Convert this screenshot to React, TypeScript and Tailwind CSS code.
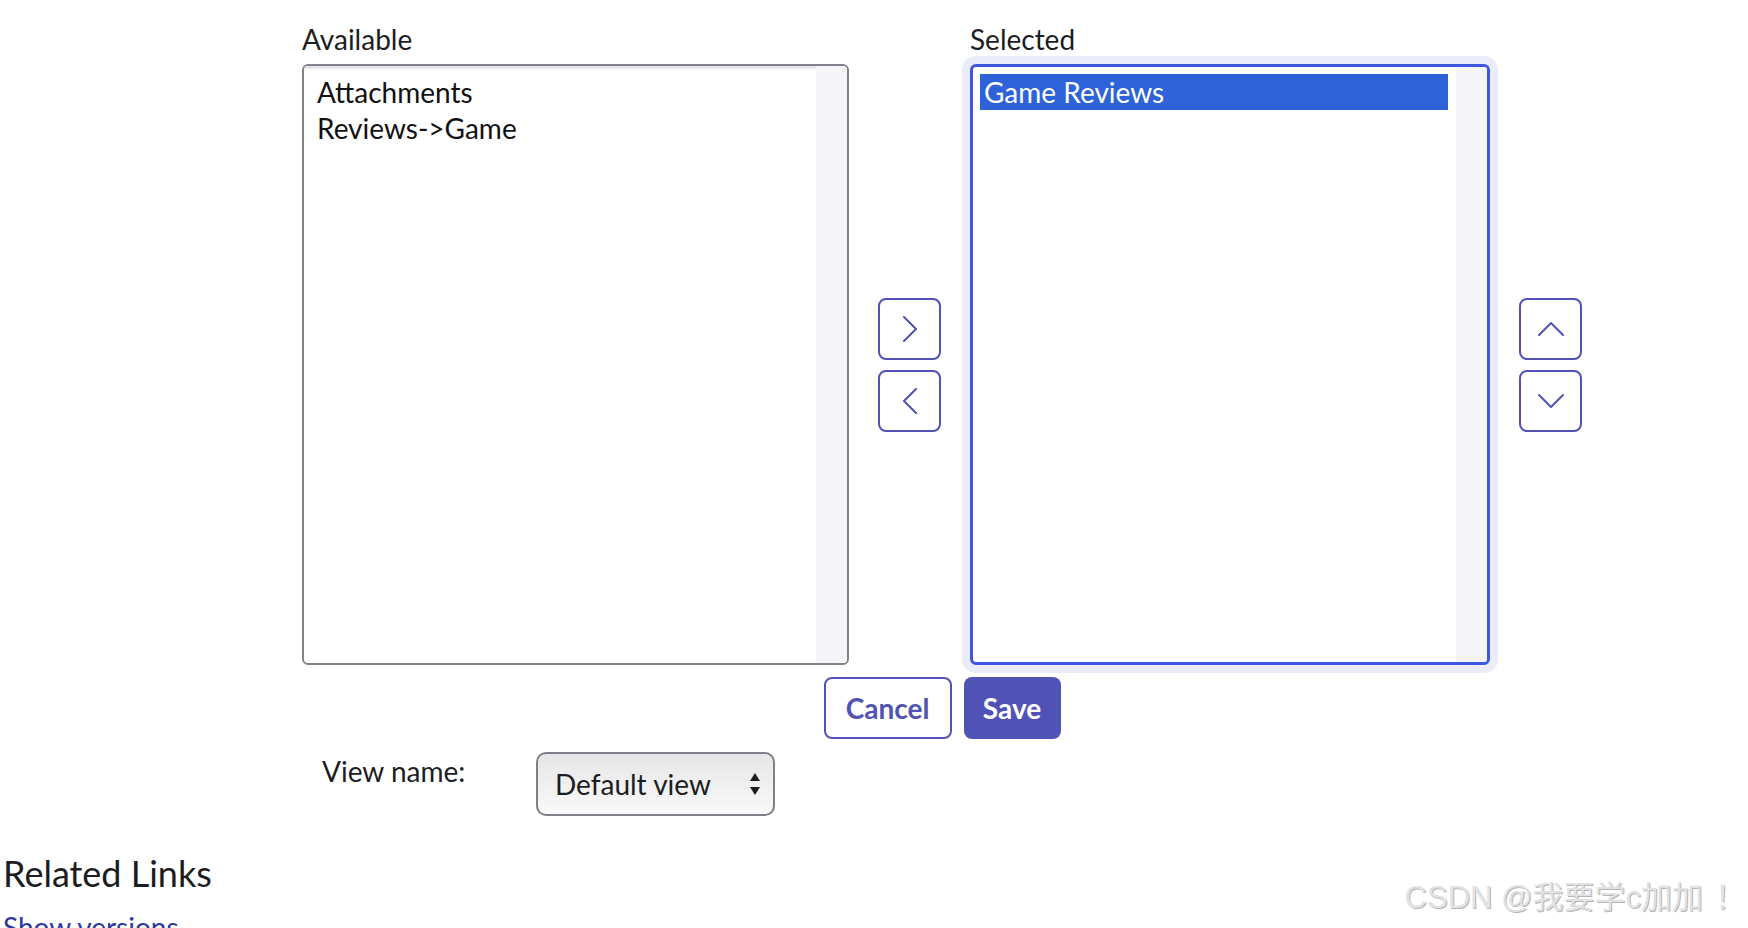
import React from "react";

const INDIGO = "#5053b5";

function Chevron({ dir }: { dir: "right" | "left" | "up" | "down" }) {
  const paths: Record<string, string> = {
    right: "M7 1 L19 13 L7 25",
    left: "M19 1 L7 13 L19 25",
    up: "M1 19 L13 7 L25 19",
    down: "M1 7 L13 19 L25 7",
  };
  return (
    <svg width="26" height="26" viewBox="0 0 26 26" fill="none">
      <path d={paths[dir]} stroke={INDIGO} strokeWidth="2" strokeLinecap="round" strokeLinejoin="round" />
    </svg>
  );
}

function SquareButton({ dir }: { dir: "right" | "left" | "up" | "down" }) {
  return (
    <button className="w-[63px] h-[62px] border-2 border-[#5053b5] rounded-[8px] bg-white flex items-center justify-center">
      <Chevron dir={dir} />
    </button>
  );
}

export default function App() {
  return (
    <div className="w-[1748px] h-[928px] overflow-hidden bg-white relative font-['Lato',sans-serif] text-[#1c1d22]">
      <div className="ml-[302px] w-[1280px] pt-[22px]">
        <div className="grid grid-cols-[547px_63px_520px_63px] gap-x-[29px]">
          <div className="text-[28px] leading-[34px]">Available</div>
          <div />
          <div className="text-[28px] leading-[34px]">Selected</div>
          <div />

          {/* Available list */}
          <div className="mt-[8px] h-[601px] border-2 border-[#80838c] rounded-[6px] overflow-hidden flex bg-white">
            <div className="flex-1 pt-[8px] pl-[8px] pr-[8px] shadow-[inset_0_5px_3px_-2px_#e3e3e3]">
              <div className="h-[36px] leading-[36px] text-[28px] px-[5px] text-[#111]">Attachments</div>
              <div className="h-[36px] leading-[36px] text-[28px] px-[5px] text-[#111]">Reviews-&gt;Game</div>
            </div>
            <div className="w-[31px] bg-[#f5f5f7]" />
          </div>

          {/* Middle buttons */}
          <div className="mt-[8px] h-[601px] flex flex-col justify-center gap-[10px]">
            <SquareButton dir="right" />
            <SquareButton dir="left" />
          </div>

          {/* Selected list */}
          <div className="mt-[8px] h-[601px] border-[3px] border-[#3f56de] rounded-[6px] flex bg-white ring-[8px] ring-[#eaecf9]">
            <div className="flex-1 pt-[7px] pl-[7px] pr-[8px]">
              <div className="h-[36px] leading-[36px] text-[28px] px-[4px] bg-[#2d62d9] text-white">Game Reviews</div>
            </div>
            <div className="w-[31px] bg-[#f5f5f7] rounded-br-[3px] rounded-tr-[3px]" />
          </div>

          {/* Right buttons */}
          <div className="mt-[8px] h-[601px] flex flex-col justify-center gap-[10px]">
            <SquareButton dir="up" />
            <SquareButton dir="down" />
          </div>
        </div>

        {/* Cancel / Save */}
        <div className="mt-[12px] flex justify-center gap-[12px]">
          <button className="w-[128px] h-[62px] border-2 border-[#5053b5] rounded-[8px] bg-white text-[#5053b5] text-[28px] font-bold">
            Cancel
          </button>
          <button className="w-[97px] h-[62px] rounded-[8px] bg-[#5053b5] text-white text-[28px] font-bold">
            Save
          </button>
        </div>

        {/* View name */}
        <div className="mt-[13px] flex items-start">
          <div className="ml-[20px] mt-[2px] w-[214px] text-[28px] leading-[34px]">View name:</div>
          <div className="w-[239px] h-[64px] border-2 border-[#7d8089] rounded-[10px] bg-linear-to-b from-[#e6e6e6] to-[#f9f9f9] flex items-center pl-[17px] pr-[12px]">
            <span className="flex-1 text-[28px] leading-[34px] text-[#1c1d22]">Default view</span>
            <svg width="12" height="26" viewBox="0 0 12 26">
              <path d="M6 2 L11 10 L1 10 Z" fill="#1c1d22" />
              <path d="M1 16 L11 16 L6 24 Z" fill="#1c1d22" />
            </svg>
          </div>
        </div>
      </div>

      <div className="pl-[3px] mt-[36px]">
        <h2 className="text-[36px] leading-[43px] text-[#1c1d22]">Related Links</h2>
        <a className="block mt-[15px] text-[28px] leading-[34px] text-[#2b3a9c]">Show versions</a>
      </div>

      <div className="absolute right-[10px] bottom-[10px] text-[31px] leading-[40px] text-[#e2e2e2] font-['Liberation_Sans','Noto_Sans_CJK_SC',sans-serif] [text-shadow:1px_1px_0_#b5b5b5]">
        CSDN @我要学c加加<span className="font-['Noto_Sans_CJK_JP',sans-serif] ml-[4px]">！</span>
      </div>
    </div>
  );
}
